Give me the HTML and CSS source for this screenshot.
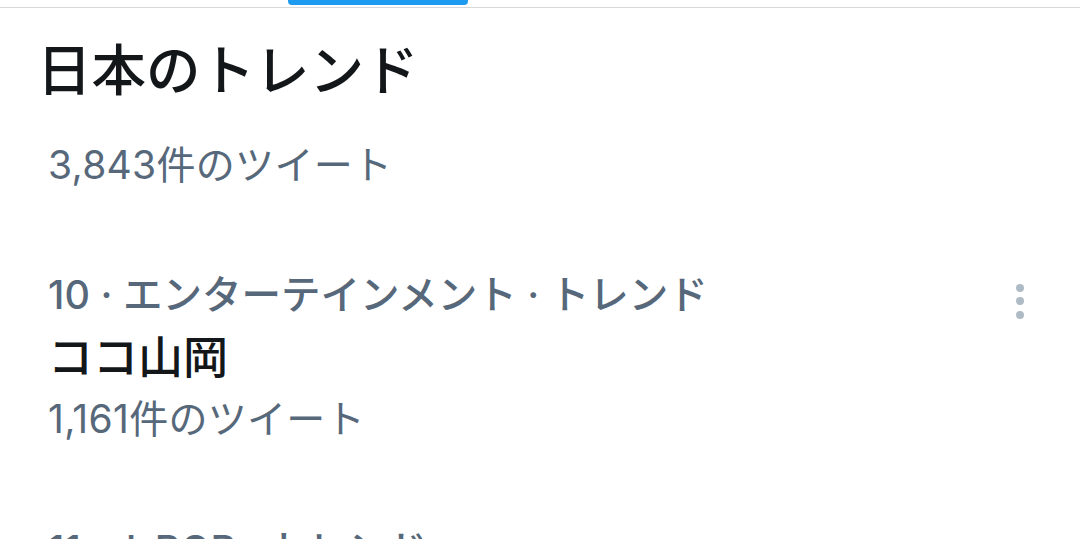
FILE: index.html
```html
<!DOCTYPE html>
<html lang="ja">
<head>
<meta charset="utf-8">
<link rel="stylesheet" href="styles.css">
</head>
<body>
<div class="tabbar">
  <div class="tab"></div>
  <div class="tab tab-active"><span class="indicator"></span></div>
  <div class="tab"></div>
</div>
<section class="header">
  <h1 class="title">日本のトレンド</h1>
  <div class="count">3,843件のツイート</div>
</section>
<ul class="trends">
  <li class="trend">
    <div class="trend-body">
      <div class="meta">10 · エンターテインメント · トレンド</div>
      <div class="name">ココ山岡</div>
      <div class="count">1,161件のツイート</div>
    </div>
    <button class="more" aria-label="その他">
      <svg width="12" height="40" viewBox="0 0 12 40"><circle cx="6" cy="7" r="4"/><circle cx="6" cy="20" r="4"/><circle cx="6" cy="34" r="4"/></svg>
    </button>
  </li>
  <li class="trend">
    <div class="trend-body">
      <div class="meta">11 · J-POP · トレンド</div>
      <div class="name">…</div>
    </div>
  </li>
</ul>
</body>
</html>
```

FILE: styles.css
```css
html, body {
  margin: 0;
  padding: 0;
  background: #ffffff;
  overflow: hidden;
}
body {
  width: 1080px;
  height: 539px;
  font-family: Inter, "Noto Sans CJK JP", sans-serif;
  color: #14171a;
}
.tabbar {
  display: flex;
  height: 7px;
  border-bottom: 1px solid #d4d8db;
  padding-left: 110px;
}
.tab {
  width: 178px;
  flex: none;
}
.tab-active {
  width: 180px;
}
.indicator {
  display: block;
  height: 5px;
  background: #1d9bf0;
  border-radius: 0 0 4px 4px;
}
.header {
  padding: 29px 0 0 37px;
}
.title {
  margin: 0;
  font-family: "Noto Sans CJK JP", sans-serif;
  font-size: 54.5px;
  line-height: 60px;
  font-weight: 500;
  color: #14171a;
}
.header .count {
  margin: 45px 0 0 11px;
}
.count {
  font-size: 39px;
  line-height: 46px;
  letter-spacing: 0.3px;
  color: #56687a;
}
.trends {
  list-style: none;
  margin: 84px 0 0 0;
  padding: 0;
}
.trend {
  display: flex;
  align-items: flex-start;
  padding-left: 48px;
  margin-bottom: 85px;
}
.trend-body {
  flex: 1;
}
.meta {
  font-size: 39.5px;
  line-height: 46px;
  font-weight: 500;
  color: #56687a;
}
.name {
  margin-top: 14px;
  font-size: 45px;
  line-height: 52px;
  font-weight: 500;
  color: #14171a;
}
.trend .count {
  margin-top: 12px;
}
.more {
  border: 0;
  background: none;
  padding: 0;
  margin: 9px 54px 0 0;
  fill: #aebbc5;
  line-height: 0;
}
```
